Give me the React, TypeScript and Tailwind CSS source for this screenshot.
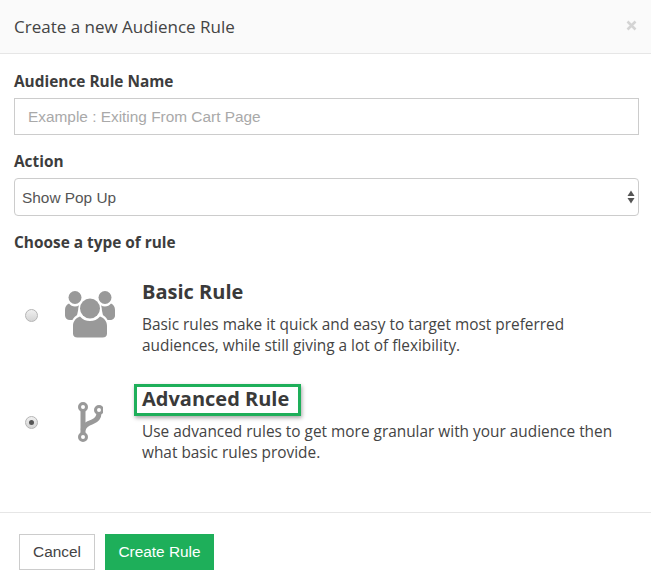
import clsx from 'clsx';

const openSans = "font-['Open_Sans',sans-serif]";
const helvetica = "font-['Liberation_Sans',Arial,sans-serif]";

function UsersIcon() {
  return (
    <svg width="52" height="50" viewBox="64 290 52 50" fill="#999999">
      <circle cx="75" cy="297.500" r="6.500" />
      <circle cx="105" cy="297.500" r="6.500" />
      <path d="M69 303.500c1.500 1.800 3.500 3 6 3 1.500 0 3-.4 4.200-1.200L76 320H70c-3 0-5-2-5-4.500V310c0-3 1.500-5.500 4-6.500z" />
      <path d="M111 303.500c-1.500 1.800-3.500 3-6 3-1.500 0-3-.4-4.200-1.200L104 320h6c3 0 5-2 5-4.500V310c0-3-1.500-5.500-4-6.500z" />
      <circle cx="90" cy="308.500" r="11.500" fill="#ffffff" />
      <circle cx="90" cy="308.500" r="10" />
      <path d="M71 338V326c0-6 3.500-10.500 9.500-12.500 2.400 3 5.700 6 9.500 6s7.100-3 9.500-6c6 2 9.500 6.500 9.500 12.500v12z" fill="#ffffff" />
      <path d="M77.500 337.500c-3 0-4.500-1.500-4.500-4V326c0-4.500 2.500-8 7-9.500 2.500 3 6 4.500 10 4.500s7.500-1.500 10-4.500c4.500 1.500 7 5 7 9.500v7.500c0 2.500-1.500 4-4.500 4z" />
    </svg>
  );
}

function BranchIcon() {
  return (
    <svg width="26" height="42" viewBox="76 400 26 42" fill="none" stroke="#999999">
      <path d="M82 409V435" strokeWidth="5" />
      <path d="M82 430c1-5 5-6.500 9-8 4-1.500 7-4 7-9" strokeWidth="5" />
      <circle cx="82" cy="407" r="3.500" strokeWidth="3" fill="#ffffff" />
      <circle cx="98" cy="410" r="3.500" strokeWidth="3" fill="#ffffff" />
      <circle cx="82" cy="437" r="3.500" strokeWidth="3" fill="#ffffff" />
    </svg>
  );
}

function Radio({ checked }: { checked?: boolean }) {
  return (
    <span
      className={clsx(
        'flex h-[13px] w-[13px] items-center justify-center rounded-full border border-[#b5b5b5]',
        'bg-gradient-to-b from-[#f0f0f0] to-[#d4d4d4]'
      )}
    >
      {checked && <span className="h-[5px] w-[5px] rounded-full bg-[#555555]" />}
    </span>
  );
}

function FieldLabel({ children }: { children: string }) {
  return (
    <div className={clsx(openSans, 'text-[15.400px] leading-[20px] font-bold text-[#3d3d3d]')}>
      {children}
    </div>
  );
}

function RuleOption({
  title,
  lines,
  icon,
  checked,
  highlight,
}: {
  title: string;
  lines: string[];
  icon: React.ReactNode;
  checked?: boolean;
  highlight?: boolean;
}) {
  return (
    <div className="flex">
      <div className={clsx('flex w-[35px] shrink-0 items-center pl-[11px]', highlight ? 'pb-[3px]' : 'pb-[5px]')}>
        <Radio checked={checked} />
      </div>
      <div className="flex w-[93px] shrink-0 items-center justify-center pr-[11px] pb-[5px]">
        {icon}
      </div>
      <div className={openSans}>
        <div
          className={clsx(
            'text-[20px] font-bold text-[#3a3a3a]',
            highlight
              ? 'ml-[-8px] inline-block border-[3px] border-[#1eaf5a] pr-[9px] pb-[2px] pl-[5px] leading-[24px] shadow-[1px_2px_4px_rgba(0,0,0,0.35)]'
              : 'leading-[26px]'
          )}
        >
          {title}
        </div>
        <div className={clsx('text-[15.400px] leading-[21px] text-[#444444]', highlight ? 'mt-[5px]' : 'mt-[9px]')}>
          {lines.map((l) => (
            <div key={l}>{l}</div>
          ))}
        </div>
      </div>
    </div>
  );
}

export default function App() {
  return (
    <div className="flex h-[587px] w-[651px] flex-col overflow-hidden bg-white">
      <div className="flex h-[54px] shrink-0 items-center justify-between border-b border-[#e6e6e6] bg-[#fafafa] pr-[14px] pl-[14px]">
        <div className={clsx(openSans, 'text-[17px] text-[#444444]')}>Create a new Audience Rule</div>
        <svg width="11" height="11" viewBox="0 0 11 11" className="mt-[-2px]">
          <path d="M1.500 1.500L9.500 9.500M9.500 1.500L1.500 9.500" stroke="#d4d4d4" strokeWidth="2.500" />
        </svg>
      </div>

      <div className="flex flex-col px-[14px] pt-[18px]">
        <FieldLabel>Audience Rule Name</FieldLabel>
        <input
          readOnly
          placeholder="Example : Exiting From Cart Page"
          className={clsx(
            helvetica,
            'mt-[6px] h-[37px] w-[625px] border border-[#cccccc] px-[13px] text-[15.400px] text-[#444444] outline-none placeholder:text-[#a9a9a9]'
          )}
        />
        <div className="mt-[17px]">
          <FieldLabel>Action</FieldLabel>
        </div>
        <div
          className={clsx(
            helvetica,
            'mt-[6px] flex h-[38px] w-[625px] items-center justify-between rounded-[4px] border border-[#cccccc] pr-[3px] pl-[7px] text-[15.400px] text-[#555555]'
          )}
        >
          <span className="pt-[1px]">Show Pop Up</span>
          <svg width="8" height="14" viewBox="0 0 8 14" fill="#555555">
            <path d="M4 0.500L7.500 6H0.500Z" />
            <path d="M4 13.500L7.500 8H0.500Z" />
          </svg>
        </div>
        <div className="mt-[17px]">
          <FieldLabel>Choose a type of rule</FieldLabel>
        </div>
      </div>

      <div className="flex flex-col gap-[28px] pt-[26px] pl-[14px]">
        <RuleOption
          title="Basic Rule"
          icon={<UsersIcon />}
          lines={[
            'Basic rules make it quick and easy to target most preferred',
            'audiences, while still giving a lot of flexibility.',
          ]}
        />
        <RuleOption
          title="Advanced Rule"
          icon={<BranchIcon />}
          checked
          highlight
          lines={[
            'Use advanced rules to get more granular with your audience then',
            'what basic rules provide.',
          ]}
        />
      </div>

      <div className="mt-auto flex h-[75px] shrink-0 items-start gap-[10px] border-t border-[#e6e6e6] pt-[21px] pl-[19px]">
        <button className={clsx(helvetica, 'h-[36px] w-[76px] border border-[#cccccc] text-[15.400px] text-[#444444]')}>
          Cancel
        </button>
        <button className={clsx(helvetica, 'h-[36px] w-[109px] bg-[#1eaf5a] text-[15.400px] text-white')}>
          Create Rule
        </button>
      </div>
    </div>
  );
}
